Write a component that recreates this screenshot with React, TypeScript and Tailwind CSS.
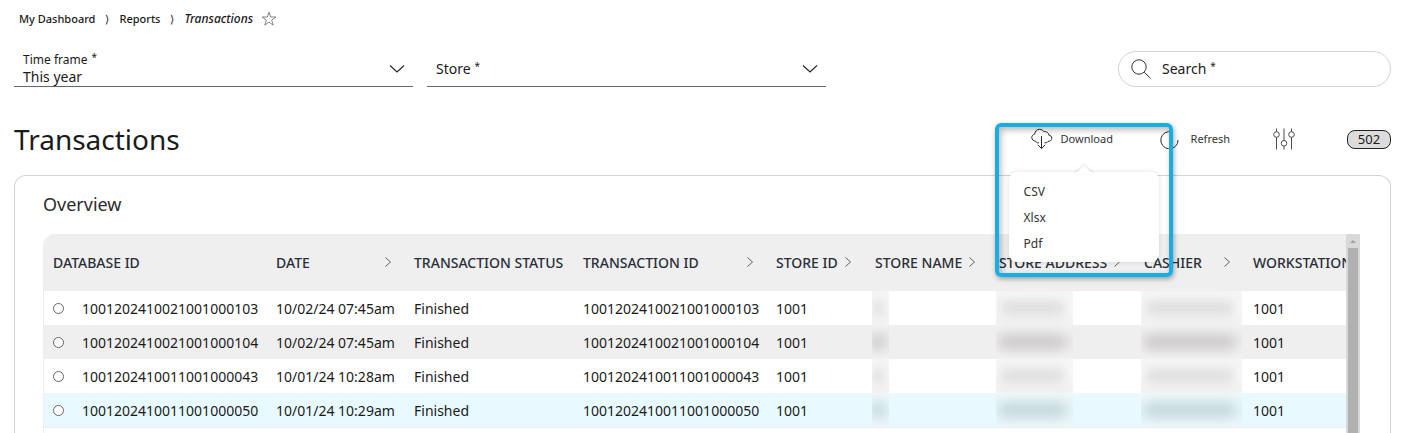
import type { ReactNode } from "react";

type Tone = "white" | "grey" | "blue";

type Row = { id: string; date: string; tone: Tone };

const rows: Row[] = [
  { id: "1001202410021001000103", date: "10/02/24 07:45am", tone: "white" },
  { id: "1001202410021001000104", date: "10/02/24 07:45am", tone: "grey" },
  { id: "1001202410011001000043", date: "10/01/24 10:28am", tone: "white" },
  { id: "1001202410011001000050", date: "10/01/24 10:29am", tone: "blue" },
];

const rowTone: Record<Tone, string> = {
  white: "bg-white",
  grey: "bg-[#efefef]",
  blue: "bg-[#e8faff]",
};

const hazeTone: Record<Tone, string> = {
  white: "bg-linear-to-b from-[#f7f6f6] via-[#fafafa] to-[#f3f2f2]",
  grey: "bg-linear-to-b from-[#f3f2f2] via-[#ebeaea] to-[#f4f3f3]",
  blue: "bg-linear-to-b from-[#f0f9fb] via-[#e2f3f7] to-[#edf9fc]",
};

const smearTone: Record<Tone, string> = {
  white: "bg-[#dfdedf]",
  grey: "bg-[#cfcccd]",
  blue: "bg-[#c8d9de]",
};

const columns: { label: string; width: string; sort?: string }[] = [
  { label: "DATABASE ID", width: "w-[223px]" },
  { label: "DATE", width: "w-[138px]", sort: "justify-between pr-[10px]" },
  { label: "TRANSACTION STATUS", width: "w-[169px]" },
  { label: "TRANSACTION ID", width: "w-[193px]", sort: "justify-between pr-[10px]" },
  { label: "STORE ID", width: "w-[99px]", sort: "gap-1" },
  { label: "STORE NAME", width: "w-[124px]", sort: "gap-1" },
  { label: "STORE ADDRESS", width: "w-[145px]", sort: "gap-1" },
  { label: "CASHIER", width: "w-[109px]", sort: "justify-between pr-[10px]" },
  { label: "WORKSTATION ID", width: "" },
];

function SortIcon() {
  return (
    <svg width="12" height="12" viewBox="0 0 12 12" fill="none" stroke="#5c6068" strokeWidth="1" className="mb-[2px] shrink-0" aria-hidden="true">
      <path d="M3.500 1.500 8.500 6 3.500 10.500" />
    </svg>
  );
}

function ChevronDown() {
  return (
    <svg width="16" height="10" viewBox="0 0 16 10" fill="none" stroke="#222" strokeWidth="1.1" aria-hidden="true">
      <path d="M1 1.500 8 8l7-6.500" />
    </svg>
  );
}

function Required() {
  return <span className="ml-1 text-[10px] leading-[10px]">*</span>;
}

function Redacted({ tone, width, inset }: { tone: Tone; width: string; inset: string }) {
  return (
    <div className={`-ml-[3px] flex h-[34px] items-center overflow-hidden ${width} ${hazeTone[tone]}`}>
      <div className={`h-4 flex-1 blur-[6px] ${inset} ${smearTone[tone]}`} />
    </div>
  );
}

function Cell({ children }: { children: ReactNode }) {
  return <td className="h-[34px] p-0 pl-[10px]">{children}</td>;
}

export default function App() {
  return (
    <main className="flex h-screen flex-col overflow-hidden bg-white pr-[15px] pl-[14px] font-['Noto_Sans',sans-serif] text-[#1a1a1a]">
      <nav aria-label="Breadcrumb" className="flex h-[38px] shrink-0 items-center gap-[10px] pl-[5px] text-[11px] font-medium">
        <a href="#dashboard">My Dashboard</a>
        <span className="font-normal">⟩</span>
        <a href="#reports">Reports</a>
        <span className="font-normal">⟩</span>
        <a href="#transactions" className="text-[12px] italic">Transactions</a>
        <button type="button" aria-label="Add to favourites" className="-ml-[2px]">
          <svg width="16" height="16" viewBox="0 0 16 16" fill="none" stroke="#666" strokeWidth="0.8">
            <path d="M8 1.200 9.700 6h5.100l-4.100 3.100 1.500 5L8 11.200l-4.200 2.900 1.500-5L1.200 6h5.100z" />
          </svg>
        </button>
      </nav>

      <div className="mt-[13px] flex h-9 shrink-0 gap-[14px]">
        <button type="button" aria-haspopup="listbox" className="flex w-[399px] items-center justify-between border-b border-[#666] pr-2 pl-[9px] text-left">
          <span className="flex flex-col">
            <span className="flex text-[12px] leading-4">Time frame<Required /></span>
            <span className="text-[14px] leading-[18px]">This year</span>
          </span>
          <ChevronDown />
        </button>
        <button type="button" aria-haspopup="listbox" className="flex w-[399px] items-center justify-between border-b border-[#666] pr-2 pl-[9px] text-left">
          <span className="flex text-[14px] leading-4">Store<Required /></span>
          <ChevronDown />
        </button>
        <label className="ml-auto flex w-[273px] items-center rounded-full border border-[#d3d3d3] pl-3">
          <svg width="20" height="20" viewBox="0 0 20 20" fill="none" stroke="#333" strokeWidth="1" className="shrink-0" aria-hidden="true">
            <circle cx="8" cy="8" r="7.200" />
            <path d="m13.200 13.200 6.300 6.100" />
          </svg>
          <span className="ml-[11px] flex shrink-0 text-[14px] leading-4">Search<Required /></span>
          <input type="text" className="min-w-0 flex-1 bg-transparent px-2 text-[14px] outline-none" />
        </label>
      </div>

      <div className="mt-[31px] flex h-[42px] shrink-0 items-center">
        <h1 className="text-[28px] leading-9">Transactions</h1>
        <div className="ml-auto flex items-center text-[11px] leading-5">
          <div className="relative z-10 w-[83px]">
            <button type="button" aria-haspopup="menu" aria-expanded="true" className="flex h-5 items-center gap-2 whitespace-nowrap text-[#333]">
              <svg width="22" height="22" viewBox="0 0 22 22" fill="none" stroke="#2b2b2b" strokeWidth="1" className="shrink-0" aria-hidden="true">
                <path d="M8 14.800H6.800C5.700 14.800 5.100 14.300 4.800 13.300 2.500 13 .8 11.600.8 9.600c0-1.900 1.200-3.200 3-3.600C3.900 3.300 5.900 1.300 8.500 1.300c1.900 0 3.500.9 4.300 2.400 2.500-.6 4.800.9 5 3.400 1.800.4 3 1.400 3 3.100 0 2.100-1.600 3.300-3.800 3.200-.5.9-1.200 1.400-2.400 1.400h-1.200" />
                <path d="M10.500 8v12.500M6.800 16.800l3.700 3.800 3.700-3.800" />
              </svg>
              Download
            </button>
            <ul role="menu" className="absolute top-[43px] -left-[22px] w-[150px] rounded-lg bg-white pt-[7px] pb-[5px] pl-[15px] text-[12px] leading-[26px] text-[#333] shadow-[0_0_5px_rgba(0,0,0,0.12)]">
              <svg width="18" height="9" viewBox="0 0 18 9" className="absolute -top-[7px] left-[66px] overflow-visible drop-shadow-[0_-1px_1px_rgba(0,0,0,0.12)]" aria-hidden="true">
                <path d="M0 7.500C3 7 6 3 9 0 12 3 15 7 18 7.500V9H0z" fill="#fff" />
              </svg>
              <li role="none"><button type="button" role="menuitem">CSV</button></li>
              <li role="none"><button type="button" role="menuitem">Xlsx</button></li>
              <li role="none"><button type="button" role="menuitem">Pdf</button></li>
            </ul>
            <div className="pointer-events-none absolute -top-[6px] -left-[36px] h-[154px] w-[178px] rounded-md border-4 border-[#17aee5] shadow-[1px_2px_5px_rgba(0,0,0,0.35),inset_2px_3px_6px_rgba(0,0,0,0.28)]" />
          </div>
          <button type="button" className="ml-[46px] flex items-center gap-3 text-[#333]">
            <svg width="19" height="20" viewBox="0 0 19 20" fill="none" stroke="#2b2b2b" strokeWidth="1" aria-hidden="true">
              <path d="M12 3A8.600 8.600 0 1 0 18 11" />
              <path d="M9.500 2.200 12.200 3l-1 2.600" />
            </svg>
            Refresh
          </button>
          <button type="button" aria-label="Filter settings" className="ml-[43px]">
            <svg width="22" height="22" viewBox="0 0 22 22" fill="none" stroke="#4a4a4a" strokeWidth="1" aria-hidden="true">
              <path d="M3.500.5v3.200M3.500 9.300v12.200M11 .5v12M11 18.100v3.400M18.500.5v3.200M18.500 9.300v12.200" />
              <circle cx="3.500" cy="6.500" r="2.800" />
              <circle cx="11" cy="15.300" r="2.800" />
              <circle cx="18.500" cy="6.500" r="2.800" />
            </svg>
          </button>
          <span className="ml-[52px] flex h-[19px] w-11 items-center justify-center rounded-lg border border-[#222] bg-[#dcdcdc] text-[13px]">502</span>
        </div>
      </div>

      <section className="mt-[15px] flex min-h-0 flex-1 flex-col rounded-t-xl border border-b-0 border-[#d3d3d3] pr-[30px] pl-7">
        <h2 className="mb-[2px] flex h-14 shrink-0 items-center text-[18px] text-[#2b2b2b]">Overview</h2>
        <div className="flex min-h-0 flex-1">
          <div className="min-w-0 flex-1 overflow-hidden rounded-tl-xl border-l border-[#efefef]">
            <table className="-ml-px w-full min-w-[1303px] table-fixed border-collapse text-left text-[14px] whitespace-nowrap">
              <thead>
                <tr className="h-[57px] bg-[#efefef] text-[#2a2e38]">
                  {columns.map((c) => (
                    <th key={c.label} scope="col" className={`p-0 pl-[10px] font-medium ${c.width}`}>
                      <span className={`flex items-center ${c.sort ?? ""}`}>
                        {c.label}
                        {c.sort && <SortIcon />}
                      </span>
                    </th>
                  ))}
                </tr>
              </thead>
              <tbody>
                {rows.map((r) => (
                  <tr key={r.id} className={rowTone[r.tone]}>
                    <Cell>
                      <label className="flex items-center gap-[18px]">
                        <input type="radio" name="transaction" className="size-[11px] appearance-none rounded-full border border-[#666] bg-white" />
                        {r.id}
                      </label>
                    </Cell>
                    <Cell>{r.date}</Cell>
                    <Cell>Finished</Cell>
                    <Cell>{r.id}</Cell>
                    <Cell>1001</Cell>
                    <Cell><Redacted tone={r.tone} width="w-[17px]" inset="mr-1" /></Cell>
                    <Cell><Redacted tone={r.tone} width="w-[77px]" inset="mr-2 ml-1" /></Cell>
                    <Cell><Redacted tone={r.tone} width="w-[101px]" inset="mr-2 ml-1" /></Cell>
                    <Cell>1001</Cell>
                  </tr>
                ))}
                <tr className="h-[34px] border-t border-[#e6eef0]"><td colSpan={9} /></tr>
              </tbody>
            </table>
          </div>
          <div aria-hidden="true" className="flex w-[14px] shrink-0 flex-col items-center bg-[#d9d9d9]">
            <svg width="14" height="14" viewBox="0 0 14 14" className="shrink-0">
              <path d="M4 9 7 6l3 3z" fill="#a3a3a3" />
            </svg>
            <div className="w-[10px] flex-1 bg-[#b1b1b1]" />
          </div>
        </div>
      </section>
    </main>
  );
}
